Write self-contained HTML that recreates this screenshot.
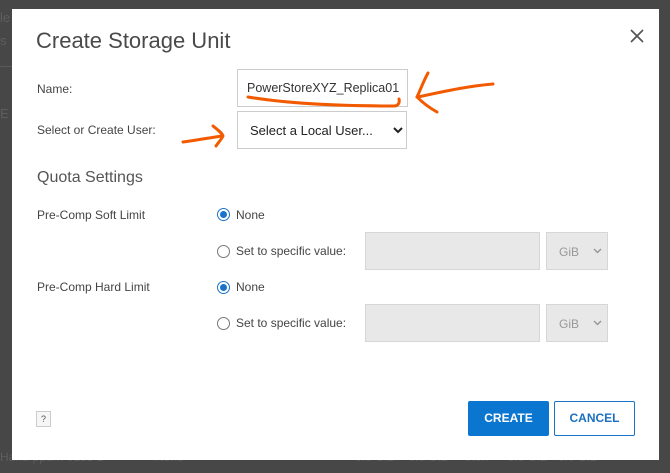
<!DOCTYPE html>
<html><head><style>
body{margin:0;width:670px;height:473px;background:#474747;position:relative;overflow:hidden;font-family:"Liberation Sans",sans-serif;}
.bg{position:absolute;color:#5e5e5e;font-size:13px}
.dlg{position:absolute;left:12px;top:9px;width:647px;height:451px;background:#fff;}
.a{position:absolute;white-space:nowrap}
.lbl{font-size:12px;color:#444}
.radio{position:absolute;width:11px;height:11px;border:1px solid #777;border-radius:50%;background:#fff}
.radio.on{border-color:#1a73c8}
.radio.on:after{content:"";position:absolute;left:2px;top:2px;width:7px;height:7px;border-radius:50%;background:#1a73c8}
.inp{position:absolute;background:#e8e8e8;border:1px solid #d6d6d6;box-sizing:border-box}
</style></head><body>
<div class="bg" style="left:0;top:10px">le</div>
<div class="bg" style="left:0;top:33px">s</div>
<div style="position:absolute;left:0;top:66px;width:12px;height:1px;background:#5a5a5a"></div>
<div class="bg" style="left:0;top:106px">E</div>
<div class="bg" style="left:0;top:450px;font-size:12px">Hana-ppdm-0188 1</div>
<div class="bg" style="left:155px;top:450px;font-size:12px">None</div>
<div class="bg" style="left:355px;top:450px;font-size:12px">0.0 GiB &nbsp;&nbsp; 0.0 GiB &nbsp;&nbsp;&nbsp; 0.0x &nbsp;&nbsp;&nbsp;&nbsp; 0.0 GiB &nbsp; 0.0 GiB</div>
<div class="dlg"></div>
<div class="a" style="left:36px;top:28px;font-size:22px;color:#4a4a4a">Create Storage Unit</div>
<svg class="a" style="left:630px;top:29px" width="14" height="14"><path d="M1 1L13 13M13 1L1 13" stroke="#555" stroke-width="1.7"/></svg>
<div class="a lbl" style="left:37px;top:82px">Name:</div>
<div class="a" style="left:237px;top:69px;width:171px;height:38px;border:1px solid #ccc;box-sizing:border-box;font-size:12.5px;color:#333;padding:11px 0 0 9px">PowerStoreXYZ_Replica01</div>
<div class="a lbl" style="left:37px;top:123px">Select or Create User:</div>
<div class="a" style="left:237px;top:111px;width:170px;height:38px;border:1px solid #ccc;box-sizing:border-box;font-size:13px;color:#222;padding:11px 0 0 12px">Select a Local User...</div>
<svg class="a" style="left:393px;top:127px" width="10" height="7"><path d="M1 1L5 5L9 1" stroke="#222" stroke-width="2" fill="none"/></svg>
<div class="a" style="left:37px;top:169px;font-size:16px;color:#555">Quota Settings</div>
<div class="a lbl" style="left:37px;top:208px">Pre-Comp Soft Limit</div>
<div class="radio on" style="left:217px;top:208px"></div>
<div class="a lbl" style="left:236px;top:208px">None</div>
<div class="radio" style="left:217px;top:245px"></div>
<div class="a lbl" style="left:236px;top:244px">Set to specific value:</div>
<div class="inp" style="left:365px;top:232px;width:175px;height:38px"></div>
<div class="inp" style="left:546px;top:232px;width:62px;height:38px"></div>
<div class="a" style="left:559px;top:245px;font-size:12px;color:#999">GiB</div>
<svg class="a" style="left:593px;top:248px" width="9" height="6"><path d="M1 1L4.5 4.5L8 1" stroke="#999" stroke-width="1.5" fill="none"/></svg>
<div class="a lbl" style="left:37px;top:280px">Pre-Comp Hard Limit</div>
<div class="radio on" style="left:217px;top:281px"></div>
<div class="a lbl" style="left:236px;top:280px">None</div>
<div class="radio" style="left:217px;top:317px"></div>
<div class="a lbl" style="left:236px;top:316px">Set to specific value:</div>
<div class="inp" style="left:365px;top:304px;width:175px;height:38px"></div>
<div class="inp" style="left:546px;top:304px;width:62px;height:38px"></div>
<div class="a" style="left:559px;top:317px;font-size:12px;color:#999">GiB</div>
<svg class="a" style="left:593px;top:320px" width="9" height="6"><path d="M1 1L4.5 4.5L8 1" stroke="#999" stroke-width="1.5" fill="none"/></svg>
<div class="a" style="left:36px;top:411px;width:15px;height:16px;border:1px solid #ccc;box-sizing:border-box;font-size:9px;color:#555;text-align:center;line-height:14px;background:#f6f6f6">?</div>
<div class="a" style="left:468px;top:401px;width:81px;height:35px;background:#0a76d0;border-radius:2px;color:#fff;font-size:12px;font-weight:bold;text-align:center;line-height:35px">CREATE</div>
<div class="a" style="left:554px;top:401px;width:81px;height:35px;border:1px solid #1a73c8;box-sizing:border-box;border-radius:2px;color:#1a6fc0;font-size:12px;font-weight:bold;text-align:center;line-height:33px">CANCEL</div>
<svg class="a" style="left:0;top:0" width="670" height="473">
<g stroke="#f25a00" stroke-width="3" fill="none" stroke-linecap="round">
<path d="M248 97C290 104 340 106 394 106C398 106 400 103 399 99"/>
<path d="M493 84C470 86 450 90 418 97"/>
<path d="M428 73C423 82 420 91 417 97C422 102 428 107 437 112"/>
<path d="M183 142C198 140 208 138 222 136"/>
<path d="M213 126C218 130 222 133 223 136C221 140 218 143 216 146"/>
</g></svg>
</body></html>
